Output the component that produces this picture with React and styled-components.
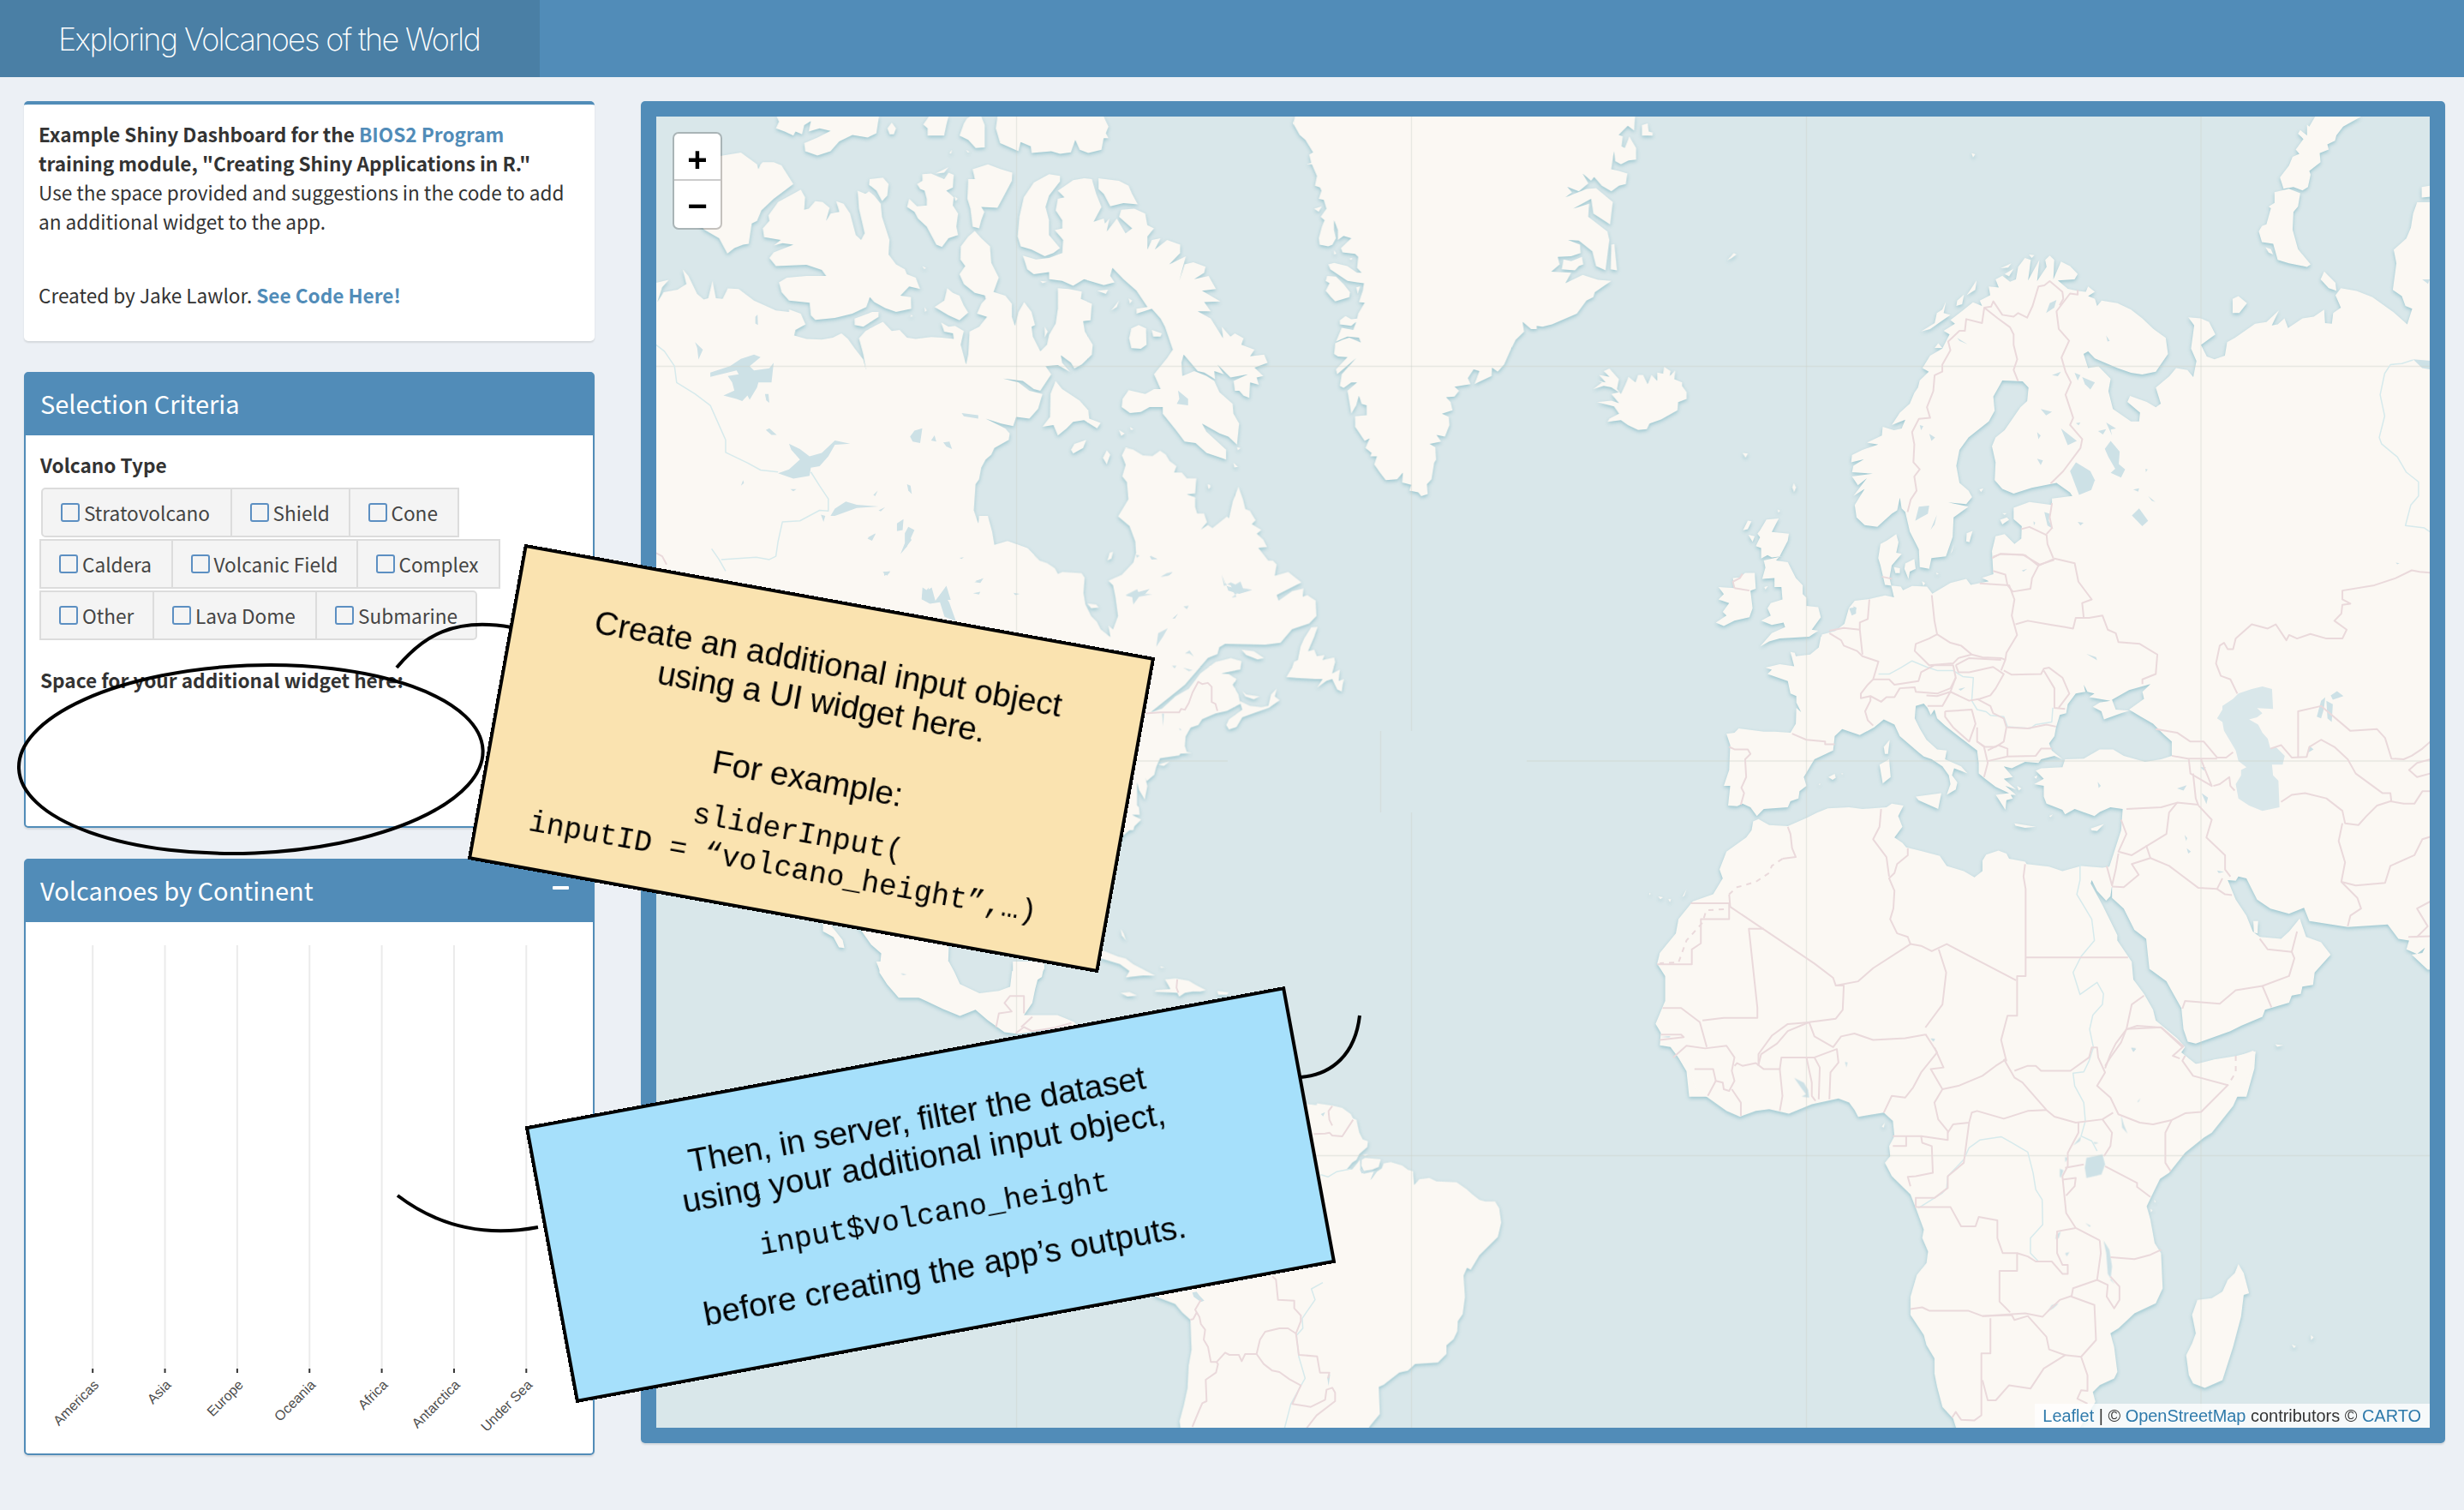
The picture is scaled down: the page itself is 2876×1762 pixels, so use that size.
import React from 'react';
import styled, { createGlobalStyle } from 'styled-components';

const sourceSans = '"Noto Sans CJK JP", "Noto Sans", sans-serif';
const helvetica = '"Liberation Sans", Arial, sans-serif';
const mono = '"Liberation Mono", "Courier New", monospace';
const blue = '#518cb8';

const GlobalStyle = createGlobalStyle`
  * { box-sizing: border-box; }
  body { margin: 0; background: #ecf0f5; }
`;

const Page = styled.div`
  position: relative;
  width: 2876px;
  height: 1762px;
  overflow: hidden;
  background: #ecf0f5;
  color: #333;
  font-family: ${sourceSans};
  font-size: 22.6px;
`;

const Header = styled.header`
  display: flex;
  height: 90px;
  background: ${blue};
`;

const Logo = styled.div`
  width: 630px;
  padding-left: 68px;
  background: #4a7fa5;
  color: #fff;
  font: 200 36px/92px Inter, ${helvetica};
  letter-spacing: -1.64px;
  white-space: nowrap;
`;

const Content = styled.main`
  display: flex;
  align-items: flex-start;
  gap: 54px;
  padding: 28px 22px 0 28px;
`;

const Sidebar = styled.div`
  display: flex;
  flex-direction: column;
  gap: 36px;
  width: 666px;
`;

const IntroCard = styled.section`
  height: 280px;
  padding: 18px 17px 0;
  border-top: 4px solid ${blue};
  border-radius: 5px;
  background: #fff;
  box-shadow: 0 2px 2px rgba(0, 0, 0, 0.1);
  line-height: 34.1px;
  white-space: nowrap;
`;

const Credit = styled.p`
  margin: 52px 0 0;
`;

const Link = styled.a`
  color: ${(p) => p.$color || blue};
  font-weight: ${(p) => (p.$plain ? 400 : 700)};
`;

const Card = styled.section`
  height: ${(p) => p.$height}px;
  border: 2px solid ${blue};
  border-radius: 5px;
  background: #fff;
  box-shadow: 0 2px 2px rgba(0, 0, 0, 0.1);
`;

const CardHeader = styled.h3`
  display: flex;
  justify-content: space-between;
  align-items: flex-start;
  height: 72px;
  margin: 0;
  padding: 0 28px 0 17px;
  background: ${blue};
  color: #fff;
  font-size: 29px;
  font-weight: 400;
  line-height: 68px;
`;

const Collapse = styled.span`
  width: 19px;
  height: 4px;
  margin-top: 30px;
  border-radius: 1px;
  background: #fff;
`;

const FieldLabel = styled.div`
  padding-left: 17px;
  margin-top: ${(p) => p.$top}px;
  font-weight: 700;
  line-height: 34px;
`;

const CheckRows = styled.div`
  display: flex;
  flex-direction: column;
  gap: 2px;
  margin: 9px 0 0 16px;
`;

const CheckRow = styled.div`
  display: flex;
  margin-left: ${(p) => p.$indent || 0}px;
`;

const CheckButton = styled.label`
  display: flex;
  align-items: center;
  gap: 5px;
  width: ${(p) => p.$width}px;
  height: 58px;
  padding-left: 21px;
  margin-right: -2px;
  border: 2px solid #dcdcdc;
  border-radius: ${(p) => p.$radius || '0'};
  background: #f4f4f4;
  color: #444;
  white-space: nowrap;
`;

const CheckBox = styled.span`
  flex: none;
  width: 22px;
  height: 22px;
  border: 2.5px solid #5c8fc2;
  border-radius: 3px;
`;

const Chart = styled.svg`
  display: block;
  width: 662px;
  height: 620px;
`;

const MapCard = styled.section`
  position: relative;
  width: 2106px;
  height: 1566px;
  padding: 18px;
  border-radius: 5px;
  background: ${blue};
  box-shadow: 0 2px 2px rgba(0, 0, 0, 0.1);
`;

const MapCanvas = styled.svg`
  display: block;
  width: 2070px;
  height: 1530px;
  background: #d9e7ea;
`;

const LandLayer = styled.g`
  fill: #fbf8f3;
  filter: drop-shadow(0 2px 2px rgba(130, 185, 196, 0.7));
`;

const Lake = styled.polygon`
  fill: ${(p) => (p.$open ? '#d9e7ea' : '#cde1e6')};
`;

const Line = styled.polyline`
  fill: none;
  stroke: ${(p) => p.$color};
  stroke-width: ${(p) => p.$weight}px;
  stroke-dasharray: ${(p) => (p.$dashed ? '6 6' : 'none')};
  stroke-linejoin: round;
  vector-effect: non-scaling-stroke;
`;

const ZoomControl = styled.div`
  position: absolute;
  top: 36px;
  left: 37px;
  width: 58px;
  border: 2px solid rgba(0, 0, 0, 0.22);
  border-radius: 7px;
  background: #fff;
  background-clip: padding-box;
`;

const ZoomButton = styled.div`
  height: 53px;
  color: #000;
  font: 700 40px/61px ${helvetica};
  text-align: center;
  & + & { height: 57px; border-top: 2px solid #ccc; line-height: 59px; }
`;

const Attribution = styled.div`
  position: absolute;
  right: 18px;
  bottom: 18px;
  height: 28px;
  padding: 0 10px 0 9px;
  background: rgba(255, 255, 255, 0.75);
  font: 19.95px/28px ${helvetica};
  white-space: nowrap;
`;

const Annotations = styled.svg`
  position: absolute;
  inset: 0;
  width: 2876px;
  height: 1762px;
  fill: none;
  stroke: #000;
  stroke-width: 4px;
`;

const Note = styled.div`
  position: absolute;
  left: ${(p) => p.$x}px;
  top: ${(p) => p.$y}px;
  width: ${(p) => p.$width}px;
  height: ${(p) => p.$height}px;
  display: flex;
  flex-direction: column;
  align-items: center;
  padding-top: 48px;
  border: 4px solid #000;
  background: ${(p) => p.$fill};
  color: #000;
  transform: rotate(${(p) => p.$angle}deg);
`;

const NoteText = styled.div`
  margin-top: ${(p) => p.$gap || 0}px;
  font: 38.6px/45.2px ${helvetica};
  letter-spacing: ${(p) => p.$track || 0}px;
  white-space: pre;
`;

const NoteCode = styled.div`
  margin-top: ${(p) => p.$gap || 0}px;
  margin-left: ${(p) => p.$shift || 0}px;
  font: 34.6px/42.6px ${mono};
  white-space: pre;
`;

const volcanoTypes = [
  [['Stratovolcano', 222.5], ['Shield', 140], ['Cone', 129]],
  [['Caldera', 155.5], ['Volcanic Field', 218], ['Complex', 168]],
  [['Other', 134], ['Lava Dome', 192], ['Submarine', 189]],
];

const continents = ['Americas', 'Asia', 'Europe', 'Oceania', 'Africa', 'Antarctica', 'Under Sea'];

/* Each survey sheet holds its shapes in its own grid: origin and grid steps per unit. */
const sheets = [
  {
    name: 'arctic', origin: [750, 100], steps: [1.96, 2.61333],
    land: [
      '20 604 60 592 45 615 34 660 48 630 80 622 100 605 92 560 105 580 125 635 140 652 150 648 160 595 168 648 183 650 195 618 220 620 255 655 305 685 335 690 335 682 362 695 373 728 350 745 347 762 375 772 410 774 435 768 455 755 470 772 485 800 505 835 511 865 505 820 495 770 510 748 535 730 550 720 570 748 588 745 605 768 625 772 660 766 685 768 712 772 710 755 690 750 683 722 700 735 715 732 735 748 728 790 740 850 745 820 748 750 770 735 788 705 765 695 775 665 785 650 782 635 800 628 830 640 845 665 845 705 852 732 860 690 873 660 890 690 898 730 890 735 893 765 910 810 925 790 930 760 945 725 950 680 950 617 975 620 1005 628 1003 650 1028 665 1025 715 1008 718 1012 750 1030 790 1028 820 1005 850 988 862 980 845 957 822 960 845 978 873 950 852 922 855 935 880 910 930 895 925 870 900 825 893 860 905 885 930 915 940 905 985 885 1015 855 1010 848 1038 820 1030 785 1015 830 1045 840 1060 838 1080 805 1105 798 1125 785 1140 775 1165 770 1200 762 1215 758 1295 768 1335 770 1312 790 1312 800 1360 805 1400 835 1388 880 1410 895 1430 895 1725 20 1725',
      '150 220 225 204 262 240 265 255 270 240 275 233 300 233 318 243 345 300 300 345 272 380 262 412 250 420 243 482 230 485 210 495 194 512 175 465 140 438 120 400',
      '362 317 372 340 370 378 380 375 395 352 412 355 428 372 420 412 430 390 450 385 443 352 460 360 475 390 488 455 500 470 508 450 495 375 492 320 510 330 518 322 530 335 545 360 548 400 565 470 563 515 580 545 600 560 605 575 625 585 635 620 610 612 590 640 614 645 615 680 580 690 555 678 530 660 520 645 512 675 480 695 440 708 395 714 385 700 382 662 335 655 318 630 312 600 330 585 375 580 420 580 410 562 375 546 305 550 290 525 300 508 345 485 320 480 300 487 316 470 278 462 275 435 290 412 288 395 310 355',
      '307 94 312 110 305 130 325 140 345 152 350 140 365 148 370 120 385 108 380 140 405 130 430 138 400 158 370 175 372 200 400 213 430 200 450 170 480 150 515 158 535 145 541 94',
      '570 112 580 130 575 148 565 148 560 130', '655 94 642 118 652 130 652 152 690 152 695 120 700 94',
      '742 100 750 94 775 94 783 120 783 188 762 190 745 165 725 152 735 115',
      '812 94 808 130 818 175 860 200 865 172 888 185 890 205 935 200 955 208 980 203 990 165 1000 195 1020 205 1050 195 1055 160 1066 160 1060 145 1066 125 1055 94',
      '520 285 550 280 563 300 560 335 548 352 535 320 518 302',
      '640 270 660 268 690 285 700 265 712 272 710 310 695 320 712 340 710 365 722 390 718 430 722 455 700 465 685 492 672 485 650 430 630 405 622 385 605 370 610 345 628 368 650 365 650 345 645 320 635 315 628 300 640 290',
      '670 268 700 248 690 265', '755 255 790 240 820 255 846 265 845 290 825 340 812 372 775 370 782 385 775 410 770 435 755 430 750 375 743 345 745 285 760 285',
      '760 443 775 465 795 490 798 540 815 585 800 640 785 640 760 632 735 605 725 575 738 550 727 530 728 490 745 460',
      '930 270 955 275 955 292 930 335 922 370 930 410 930 455 955 495 940 510 920 520 890 500 865 490 858 460 862 400 872 340 895 295',
      '1043 282 1090 290 1112 305 1120 330 1133 362 1100 358 1070 368 1055 330 1043 315',
      '950 320 985 288 1010 282 1028 285 1038 330 1050 370 1032 415 1055 405 1058 420 1068 405 1062 445 1085 405 1105 450 1120 435 1090 400 1095 378 1125 375 1150 390 1155 425 1170 435 1155 460 1155 500 1165 470 1185 465 1172 500 1200 470 1230 485 1230 510 1205 545 1243 520 1228 595 1240 545 1260 538 1288 552 1285 570 1262 590 1295 580 1312 620 1280 625 1322 658 1285 660 1300 688 1270 688 1300 710 1328 770 1325 735 1345 765 1355 755 1375 770 1370 790 1400 805 1390 825 1422 820 1430 845 1400 860 1420 885 1405 890 1410 912 1390 905 1388 952 1375 945 1365 930 1355 930 1352 900 1385 880 1345 890 1315 850 1330 880 1308 870 1310 895 1285 875 1270 870 1238 820 1233 845 1235 885 1262 870 1290 885 1308 900 1320 935 1350 970 1352 1000 1365 1030 1360 1095 1340 1070 1320 1060 1280 1030 1290 1055 1335 1110 1335 1140 1290 1120 1265 1090 1240 1085 1220 1050 1190 1000 1190 980 1160 980 1140 995 1115 998 1096 980 1098 955 1112 928 1150 940 1170 925 1185 925 1170 880 1200 830 1213 805 1195 735 1185 710 1165 680 1130 695 1130 680 1155 675 1130 625 1100 590 1075 555 1070 580 1080 600 1055 608 1010 590 985 610 960 595 930 590 930 568 895 575 880 560 870 518 900 530 930 525 960 510 962 470 943 440 960 435 960 410 945 380 950 345 965 340',
      '697 617 710 632 725 640 735 670 745 692 725 715 700 700 668 675 690 655', '485 730 485 710 525 690 540 690 540 705 505 735',
      '1118 740 1135 730 1152 740 1153 790 1140 802 1118 800 1113 770', '1165 745 1188 755 1185 765 1168 765',
      '945 900 960 925 1000 960 1020 990 1022 1015 1048 1028 1040 1045 1010 1020 985 1025 970 1045 950 1067 940 1035 915 1040 932 1010 933 940',
      '988 1092 1015 1080 1008 1105 985 1122 980 1110', '1062 1112 1070 1125 1062 1155 1053 1135', '1090 1050 1103 1060 1095 1068', '1115 1040 1123 1048 1117 1050',
      '1072 685 1090 655 1085 675', '1112 648 1120 655 1115 665', '1040 625 1065 622 1060 635', '910 595 925 598 915 602', '920 735 927 750 920 768', '645 675 650 685 646 690', '615 698 618 703 613 705',
      '1293 1215 1299 1218 1295 1230', '1352 1150 1362 1162 1354 1164', '1360 1103 1368 1105 1362 1112', '640 550 648 555 645 560', '740 195 748 202 744 204', '702 205 708 195 706 207',
      '714 338 721 345 716 352',
    ],
    lakes: [
      '155 875 200 855 225 833 255 820 270 828 245 855 255 868 290 862 300 845 295 905 265 905 262 920 245 958 240 945 228 962 215 955 185 945 210 930 205 905 195 885 220 880 215 868 155 888',
      '335 1092 360 1108 382 1130 410 1120 440 1082 475 1092 440 1095 425 1130 405 1160 385 1165 382 1190 345 1198 310 1182 335 1170 360 1140 340 1110',
      '430 1312 440 1290 465 1268 490 1278 540 1283 490 1288 440 1312', '282 1050 290 1045 307 1065 295 1065', '612 1070 622 1052 640 1045 635 1090 618 1085', '660 1082 668 1066 672 1085',
      '688 1088 702 1085 708 1108 695 1100', '730 998 768 1005 768 1015 735 1008', '258 705 263 698 264 730 258 725', '120 782 138 805 128 835 125 800', '280 940 288 940 290 967 283 960',
      '600 1365 608 1345 622 1355 605 1405 590 1428 600 1395', '582 1335 597 1322 595 1355 582 1358', '515 1378 533 1365 525 1383', '552 1482 566 1485 553 1495', '605 1215 613 1220 616 1245 608 1235',
      '528 1248 538 1235 532 1252', '225 1220 230 1203 232 1212', '338 1230 352 1230 345 1237', '540 1295 555 1285 545 1298', '1225 930 1248 955 1248 975 1222 970 1228 955', '640 1552 655 1530 650 1568 640 1568', '672 1568 695 1525 705 1568',
      '1105 1555 1160 1535 1150 1550 1125 1560', '1328 1495 1335 1525 1360 1535 1395 1538 1365 1550 1340 1540', '1188 1495 1212 1485 1205 1493', '1160 1435 1178 1443 1165 1445', '408 1308 418 1312 414 1330', '762 1510 778 1503 770 1515', '725 1440 735 1438 730 1443', '1212 1625 1225 1610 1218 1625',
    ],
    rivers: ['31 790 50 810 73 855 78 905 120 940 155 975 190 1080 190 1118 240 1150 270 1172 310 1178', '385 1178 405 1220 425 1260 425 1297 405 1295 360 1327 320 1330 310 1390 305 1435 290 1445 260 1438 180 1445', '158 1412 175 1445 190 1480'],
    borders: ['31 1425 45 1435 55 1460'],
  },
  {
    name: 'east canada', origin: [1200, 500], steps: [2.24, 2.24],
    land: [
      '-30 303 0 315 30 345 50 352 70 365 78 380 90 375 140 378 148 390 145 430 150 460 165 490 180 505 190 525 215 545 210 515 222 525 235 490 228 440 222 410 210 398 245 382 275 350 282 325 280 295 265 255 235 230 250 205 262 185 258 140 246 125 255 95 245 70 255 50 275 55 300 70 325 72 345 58 360 68 370 85 388 98 382 115 402 115 415 130 440 130 437 170 415 172 437 180 437 205 442 222 460 222 468 245 452 264 470 252 482 260 520 230 525 235 535 190 550 152 562 185 568 210 580 215 595 240 585 250 610 265 598 275 615 290 625 310 602 312 628 345 640 345 650 355 645 385 680 375 715 402 650 435 655 450 690 425 720 418 718 440 730 435 752 450 754 490 735 510 690 525 660 560 620 565 515 563 500 572 495 590 470 600 440 635 410 670 385 690 350 718 320 742 350 732 385 700 420 680 450 640 490 610 530 600 558 608 555 630 505 640 525 642 545 655 535 670 550 695 555 720 520 738 490 745 455 760 445 775 425 782 412 805 410 830 415 845 428 848 398 850 395 855 345 862 335 885 330 905 310 922 302 900 306 910 312 935 305 970 290 945 285 925 285 985 290 990 292 1010 272 1010 296 1022 278 1040 275 1050 265 1050 248 1065 230 1100 -30 950',
      '757 518 740 520 722 548 712 570 705 605 695 610 690 625 675 650 700 652 750 655 770 655 755 678 780 660 795 655 808 682 820 688 825 655 812 660 815 630 795 640 803 610 800 598 770 605 775 592 755 595 748 578 732 582 748 545',
      '553 712 580 725 610 728 628 725 635 695 650 680 645 700 658 710 630 730 580 748 560 755 545 780 525 787 518 775 525 760 560 735', '558 578 590 582 617 600 600 604 570 592', '560 686 570 695 605 700 590 708 568 700',
      '190 1362 235 1380 255 1385 275 1400 332 1430 300 1430 255 1435 265 1418 240 1400 190 1385', '358 1440 385 1437 420 1443 440 1455 465 1468 450 1472 430 1472 410 1475 395 1485 390 1475 330 1472 335 1468 372 1465',
      '242 1475 265 1473 285 1482 260 1485', '495 1470 525 1474 520 1480 497 1480', '242 1308 250 1320 256 1338 245 1325', '207 345 213 325 222 322 218 340', '155 457 178 460 185 468 165 470', '340 878 370 870 355 882', '345 1406 357 1408 348 1410', '470 148 478 152 472 158',
    ],
    lakes: ['506 382 514 405 530 410 535 425 545 440 532 442 555 424 585 420 562 418 555 400 542 408 530 402 512 412', '255 435 285 420 290 432 325 433 290 440 275 460 272 440', '320 332 338 342 322 340', '346 388 362 378 378 375 365 385', '335 570 340 535 365 522 352 545', '406 465 420 463 415 472', '410 588 422 580 433 596 422 588', '376 620 388 620 383 627', '350 745 355 745 353 778', '405 625 430 632 420 634', '282 330 292 332 284 338', '395 783 402 788 396 788'],
    rivers: [],
    borders: ['305 745 345 742 395 742 400 733 410 735 420 718 430 690 445 662 455 668 470 665 480 675 480 715 490 720 495 738', '390 1440 388 1462 393 1475'],
  },
  {
    name: 'greenland', origin: [1450, 100], steps: [2.24, 2.61333],
    land: [
      '138 94 133 115 150 150 165 165 185 203 175 210 180 235 168 240 182 240 195 275 190 305 203 310 207 320 200 345 213 348 220 375 205 400 215 410 208 430 200 465 202 485 225 490 236 485 245 465 240 440 240 410 250 440 250 470 265 458 285 465 258 495 262 508 295 513 303 522 300 555 312 570 300 570 275 550 240 540 225 545 230 560 275 595 300 600 318 602 315 625 305 660 320 662 303 695 300 710 285 712 270 702 255 715 255 728 285 732 298 720 290 745 260 738 245 780 275 765 305 768 310 783 280 768 262 775 243 785 240 818 250 826 275 828 245 865 248 880 298 830 260 880 255 915 265 922 285 905 300 905 275 930 285 1000 298 975 305 945 312 970 325 975 325 1005 295 1008 295 1040 320 1083 333 1075 322 1105 338 1120 335 1130 352 1130 345 1155 360 1180 375 1203 405 1200 420 1180 418 1210 442 1217 437 1235 460 1240 468 1252 485 1245 483 1215 495 1200 502 1150 507 1140 505 1103 490 1092 520 1085 508 1065 530 1070 542 1035 540 1010 522 1000 550 990 545 965 533 950 555 948 567 930 555 918 597 910 590 892 605 865 620 870 607 910 652 885 653 860 668 872 685 850 700 810 715 775 737 750 733 720 755 742 770 742 770 732 785 735 810 728 875 695 900 655 918 645 922 630 965 595 930 592 890 577 845 602 860 570 808 567 830 545 825 522 860 520 885 510 883 485 852 470 880 472 915 505 925 550 950 563 960 470 955 445 905 400 907 360 865 375 912 345 918 390 962 423 969 355 925 312 900 315 845 340 862 325 850 308 880 322 905 298 890 268 912 290 920 278 940 305 965 322 985 305 1003 300 1007 268 985 260 965 255 972 200 975 230 990 240 1010 228 1030 225 1030 190 1012 155 1000 190 992 185 995 155 965 142 980 155 1008 122 1025 137 1027 94',
      '222 580 245 582 265 605 282 630 280 645 243 658 232 645 218 625 228 602 218 595', '1045 120 1060 115 1063 140 1073 143 1073 152 1045 152', '965 485 973 483 980 563 963 560', '840 530 860 535 888 522 892 545 880 550 870 563 835 560', '298 615 308 612 302 635', '188 375 208 368 200 385', '240 502 246 512 240 515', '280 527 288 525 285 532',
      '1103 857 1120 870 1118 885 1132 868 1130 895 1150 905 1150 915 1162 935 1162 955 1140 965 1138 990 1115 1005 1095 1018 1065 1030 1058 1047 1035 1050 1008 1035 990 1020 955 1025 960 1015 985 1000 972 978 928 965 965 960 985 968 965 940 985 935 965 920 945 915 918 925 940 905 930 900 950 905 933 882 960 888 945 870 960 862 985 895 980 925 990 940 1000 915 1010 888 1028 905 1035 882 1048 882 1060 910 1070 882 1085 900 1085 875 1100 878',
      '1268 533 1285 510 1292 515 1280 525', '1308 1120 1322 1122 1316 1135', '1438 1225 1442 1212 1448 1225 1443 1240', '1400 1292 1406 1296 1401 1302',
    ],
    lakes: [], rivers: [], borders: [],
  },
  {
    name: 'scandinavia', origin: [2050, 100], steps: [1.898, 2.4123],
    land: [
      '1500 328 1464 328 1455 360 1450 400 1440 430 1412 462 1418 500 1410 575 1430 592 1438 620 1453 628 1442 672 1412 638 1365 595 1330 578 1295 570 1283 590 1295 625 1278 640 1275 670 1260 668 1258 630 1235 650 1210 655 1178 682 1170 655 1155 672 1142 675 1158 632 1130 665 1105 670 1060 710 1043 722 1038 760 1015 770 998 762 985 730 1017 700 1003 665 985 655 957 652 970 675 963 740 975 775 968 820 955 800 930 795 915 818 885 850 896 895 885 905 865 890 828 873 822 890 850 920 848 945 830 945 790 910 780 860 785 825 758 790 735 795 725 755 735 748 750 768 800 795 830 808 855 813 885 805 912 755 907 710 880 685 855 655 830 630 800 612 765 605 755 620 750 600 735 592 750 580 735 565 730 580 712 578 690 572 668 548 705 545 712 530 695 508 675 495 658 545 660 490 650 478 640 490 643 510 622 550 627 490 602 548 608 490 595 485 580 510 575 545 562 552 545 535 530 545 537 568 515 565 518 590 495 605 500 620 480 610 455 635 430 660 440 670 415 690 428 700 412 740 385 760 368 795 382 805 362 830 358 850 350 865 340 895 318 920 300 955 330 940 322 965 305 970 280 960 278 985 245 1005 270 1010 235 1025 212 1040 210 1060 238 1052 215 1070 212 1088 258 1092 212 1100 225 1125 245 1105 215 1155 240 1135 218 1180 222 1215 240 1237 268 1242 300 1205 312 1195 318 1160 322 1190 330 1200 340 1255 360 1305 362 1355 383 1360 388 1330 420 1325 435 1270 437 1215 470 1185 425 1173 465 1178 478 1158 470 1140 450 1118 443 1070 450 1025 470 990 515 945 528 915 525 875 545 830 590 832 603 850 600 888 585 905 550 970 530 990 522 1015 530 1060 528 1110 545 1135 570 1148 610 1132 665 1118 695 1145 700 1155 655 1162 655 1180 605 1172 570 1188 570 1220 588 1240 587 1275 572 1290 550 1262 530 1268 522 1310 525 1375 500 1385 515 1395 475 1405 465 1388 430 1400 390 1430 378 1410 345 1408 325 1420 320 1410 285 1405 275 1350 270 1330 275 1290 290 1280 310 1262 315 1285 310 1315 322 1318 300 1350 295 1385 305 1440 285 1435 250 1445 218 1450 205 1470 195 1515 175 1535 145 1545 143 1620 1500 1620',
      '1238 87 1225 115 1220 110 1220 140 1205 125 1200 135 1212 150 1195 180 1203 192 1188 200 1180 225 1160 258 1168 290 1190 285 1210 295 1222 285 1228 250 1225 240 1250 215 1248 190 1268 180 1265 165 1282 155 1285 140 1300 115 1340 87',
      '1180 290 1205 303 1200 340 1190 355 1188 405 1200 460 1228 503 1220 510 1180 500 1155 490 1145 445 1120 440 1113 410 1120 395 1130 390 1140 345 1135 340 1148 330 1148 300', '1128 455 1140 460 1145 475 1135 470',
      '1258 523 1283 555 1285 577 1268 570 1250 545', '1055 600 1068 592 1087 612 1070 640 1055 640', '1474 285 1500 280 1500 312 1474 315', '477 190 485 193 480 202', '466 1260 479 1253 472 1285 465 1283', '540 1222 555 1215 560 1222 545 1235', '545 1203 555 1203 550 1208',
      '330 1345 350 1332 353 1360 340 1368 337 1388 328 1360', '305 1355 318 1358 318 1372 308 1372', '365 692 395 668 400 640 412 630 420 608 415 640 430 645 400 672 385 685', '445 605 460 588 456 615 443 620', '466 590 488 548 485 575', '541 514 565 500 558 512', '550 530 570 515 560 537', '604 475 616 477 610 485', '395 738 403 725 412 738', '398 1370 404 1374 400 1376', '494 1136 503 1134 498 1144', '367 1395 374 1400 370 1408', '430 1318 438 1290 434 1310',
    ],
    lakes: [
      '695 1085 708 1060 740 1085 750 1110 742 1138 715 1152', '772 1022 785 1000 805 1030 803 1065 817 1080 808 1103 785 1090 795 1078 780 1045', '352 1225 360 1185 383 1182 380 1205 365 1215', '386 1250 400 1208 395 1235', '638 1200 650 1205 648 1225 658 1248 645 1238', '832 1210 848 1190 868 1225 855 1240',
      '642 640 650 612 665 603 660 625', '775 703 783 718 778 720', '705 808 718 815 712 830', '722 820 750 835 740 855 728 840', '757 972 775 967 768 982', '775 948 797 965 785 968 788 985', '630 910 655 918 642 928', '675 965 710 1000 690 1012', '622 1050 635 1055 630 1068', '622 975 630 985 625 995', '383 980 396 990 388 1000', '362 955 370 958 365 970', '835 1137 848 1133 846 1143', '862 1078 867 1080 863 1088', '712 1228 725 1230 718 1238', '868 1155 884 1172 876 1168', '655 815 675 805 668 818', '445 710 468 728 450 718', '1455 770 1500 775 1500 800 1475 795', '1475 545 1492 545 1488 558', '708 950 718 948 714 956', '588 1365 600 1360 592 1368', '614 1226 618 1230 615 1238', '215 1465 222 1470 218 1485',
    ],
    rivers: ['1455 772 1430 782 1405 785 1392 810 1382 870 1392 930 1380 990 1385 1008 1420 1045 1440 1088 1467 1115 1467 1155 1450 1180 1438 1238 1480 1245 1495 1258'],
    borders: [
      '335 1200 342 1165 355 1140 350 1100 362 1080 348 1060 350 1010 345 975 360 938 385 935 378 905 392 860 395 815 412 805 412 785 430 745 425 720 450 690 462 690 465 657 500 668 505 625 520 622 525 607 545 645 570 650 580 640 600 653 612 620 625 565 638 562 650 550 678 580 680 600 672 618',
      '505 625 535 655 562 680 570 700 570 730 578 770 570 800 580 832', '712 575 712 588 695 585 665 635 670 685 693 718 676 765 685 805 697 835 685 870 702 935 695 955 722 995 718 1020 680 1085 652 1120', '655 1175 650 1215 655 1245 643 1262', '587 1248 605 1242 643 1265 645 1290 658 1330', '522 1330 540 1318 590 1320 628 1348 660 1335', '278 1382 300 1388',
    ],
  },
  {
    name: 'europe', origin: [1900, 600], steps: [1.6066, 2.4123],
    land: [
      '260 15 283 12 270 50 302 55 300 75 285 118 278 130 300 135 315 180 328 200 328 225 335 235 335 258 357 262 362 290 345 325 357 328 340 345 285 350 265 358 248 373 270 335 295 318 292 305 270 312 250 300 268 285 262 265 268 250 290 240 288 205 275 205 275 180 252 182 258 150 255 130 290 118 270 122 262 115 250 125 250 95 240 90 248 65 243 55 248 45',
      '220 165 238 165 240 210 230 215 234 265 228 290 200 300 180 315 165 305 185 285 178 275 190 250 170 240 180 225 170 205 200 208 197 180 210 178', '216 45 225 18 232 20 225 42', '226 58 238 62 234 78', '256 205 263 202 258 212',
      '1510 340 378 335 362 345 358 375 342 395 315 400 313 390 305 388 312 428 285 422 258 432 270 438 262 450 300 470 305 505 316 512 316 530 325 557 316 545 315 590 305 615 275 612 255 612 208 603 200 615 185 618 192 650 190 720 180 765 192 765 188 820 205 822 215 815 230 825 242 850 255 830 300 825 305 808 320 800 322 780 335 765 330 740 350 690 385 665 388 625 402 605 435 622 462 600 480 578 500 592 510 625 545 670 555 682 570 690 590 710 602 735 605 760 598 790 615 775 618 755 608 735 612 715 637 730 625 710 595 690 598 665 580 662 560 635 548 605 538 575 540 540 555 533 562 545 568 565 575 550 580 575 595 595 620 625 655 665 658 700 658 730 670 745 690 768 715 785 690 790 708 832 710 805 722 800 718 790 728 790 708 765 728 775 705 745 722 740 705 710 720 715 745 697 770 700 775 690 800 680 815 690 795 665 790 645 800 625 803 600 810 565 822 560 825 535 840 505 858 500 855 480 862 500 875 505 865 515 905 525 885 530 872 542 888 555 893 578 925 560 940 553 915 550 908 522 940 495 980 478 965 500 968 520 940 550 962 570 985 590 1005 620 1020 640 1020 680 1000 690 970 697 930 680 910 662 885 662 855 688 820 690 815 712 775 715 765 722 780 745 762 760 780 765 780 795 785 815 815 832 820 845 838 830 875 850 885 838 905 825 928 830 925 890 910 960 903 992 890 995 850 990 815 1005 790 992 748 985 745 978 715 970 710 955 695 947 672 958 665 975 665 1005 650 1022 630 1005 598 990 585 962 550 948 522 938 515 925 500 910 515 880 507 850 517 820 495 815 485 825 440 830 415 825 375 828 355 840 335 855 300 878 265 875 245 858 235 865 232 890 222 910 185 950 172 1000 178 1025 160 1070 122 1090 95 1140 90 1180 60 1235 55 1265 70 1300 70 1370 52 1435 62 1460 60 1495 80 1500 95 1530 110 1568 115 1640 1160 1640 1175 1560 1177 1512 1140 1525 1100 1535 1065 1548 1038 1515 1045 1500 1030 1475 990 1425 985 1395 968 1350 948 1310 945 1260 918 1200 918 1185 890 1100 868 1040 870 1030 880 1060 897 1088 905 1075 908 1045 908 1080 930 1110 950 1170 972 1195 978 1280 1010 1315 1038 1390 1042 1450 1050 1485 1065 1490 1130 1455 1150 1440 1190 1415 1195 1395 1240 1375 1245 1355 1262 1350 1265 1330 1285 1325 1288 1290 1318 1240 1300 1205 1272 1190 1260 1138 1240 1175 1225 1195 1185 1190 1172 1175 1160 1130 1140 1085 1125 1030 1140 1032 1145 1020 1160 1025 1180 1085 1205 1110 1240 1125 1268 1108 1278 1145 1350 1162 1425 1155 1445 1195 1465 1200 1460 1225 1480 1238 1495 1220 1490 1235 1470 1240 1500 1282 1510 1282',
      '540 795 588 785 582 830 545 805', '472 705 490 690 493 740 478 758', '480 655 491 635 488 675 482 675', '725 870 765 880 745 883 727 877', '868 885 893 872 880 892 870 890', '376 740 388 731 390 742 384 748', '358 760 361 758 360 763', '400 730 404 730 402 733', '57 1076 66 1078 61 1084', '76 1084 81 1084 79 1092', '102 1078 110 1056 106 1074', '40 1066 43 1068 41 1072', '1173 1145 1182 1145 1181 1180 1174 1178', '1214 1492 1229 1495 1218 1499', '790 850 797 845 793 853', '762 740 768 735 766 745', '730 765 738 772 733 778',
    ],
    seas: [
      '1115 540 1135 520 1145 505 1170 492 1190 485 1208 492 1210 548 1180 546 1190 560 1180 572 1165 578 1182 592 1190 615 1200 632 1205 660 1215 655 1232 680 1228 705 1208 705 1210 735 1220 750 1222 825 1190 835 1165 820 1145 800 1140 760 1150 735 1150 720 1160 712 1145 695 1140 665 1130 640 1118 610 1115 585 1105 575 1115 550',
      '782 698 815 692 812 703 790 708',
    ],
    lakes: [
      '1292 570 1300 525 1308 515 1305 550 1300 575', '1310 525 1322 535 1320 585 1312 575', '1318 510 1330 498 1342 512 1322 522', '1030 772 1048 763 1042 778', '1076 785 1088 798 1085 816', '881 753 887 765 883 771', '860 393 878 402 880 411', '1044 903 1049 912 1047 920', '1048 940 1056 950 1051 955', '1278 652 1286 662 1275 672', '944 1502 953 1505 948 1514', '568 1477 576 1477 573 1484', '415 265 428 262 428 280 420 285', '620 492 633 487 624 497', '1105 1003 1118 1007 1108 1010', '1074 712 1084 712 1080 722', '1440 136 1447 138 1443 141',
    ],
    rivers: ['470 450 490 450 512 432 533 413 560 430 580 440 610 440 628 457 648 460 645 525 655 550 672 556 680 566 705 570 712 598 755 603 765 592 795 585 797 545', '848 985 848 1030 842 1070 870 1140 875 1200 850 1245 835 1290 848 1352 880 1318 892 1350 890 1380 872 1410 866 1450 873 1500'],
    borders: [
      '308 618 335 635 370 640 370 648 388 648', '190 655 200 662 225 662 230 675 220 690 222 740 213 770 218 785 212 818', '378 335 400 355 405 370 430 385 440 400 470 415 460 465 450 480 437 505 437 518 455 512 455 525 445 555 450 580 460 595', '460 465 490 465 500 480 545 470 550 445 575 425 610 425 615 460 605 490 580 505 540 500 538 487 510 490 500 515 485 515 475 528 455 512',
      '453 240 450 295 435 305 435 325 440 395', '378 328 405 320 435 325', '570 228 575 300 580 338 565 350 540 365 538 385 555 410 565 425 610 420 620 405 645 395 625 370 605 362 580 338', '645 395 665 403 700 405 708 410', '660 195 715 200 725 240 720 285 730 340 710 390 708 410 700 440',
      '685 120 700 112 745 115 770 145 800 125', '685 160 708 170 712 200 722 218 755 210 758 180 770 145', '800 125 838 138 845 190 870 240 852 250 855 292', '727 310 750 300 795 312 820 318 835 322 840 292 865 292 890 285 900 325 915 335 920 360 960 365 993 395 990 450 965 465 965 478',
      '705 440 720 452 775 450 780 435 790 432 815 460 828 505 808 545', '780 440 800 490 800 545 820 548', '615 425 620 445 640 445 685 430 705 450 690 490 680 510 660 520 640 525 605 500 615 460', '615 425 640 405 700 410', '560 510 580 512 605 500 590 540 562 540', '595 555 645 550 652 590 640 640 610 600 595 570 595 555',
      '655 520 680 540 685 560 705 575 710 600 705 640 690 655 670 655 655 640 655 600', '712 600 750 603 785 592 803 598', '675 695 712 682 765 680 775 660 795 660', '655 640 668 655 675 700 668 740', '675 665 695 650 712 660 712 680', '990 605 1030 615 1055 640 1080 640 1105 685 1122 685 1135 670', '1020 680 1050 688 1105 688', '1052 690 1055 730 1095 765 1080 710 1075 690',
      '1060 730 1065 800 1070 820', '935 830 1000 825 1030 812 1070 818', '1098 765 1110 760 1128 740 1130 765 1138 778', '1143 505 1130 465 1112 455 1103 420 1110 370 1118 362 1125 380 1135 380 1140 350 1170 310 1200 322 1215 310 1235 355 1240 340 1255 350 1280 337 1310 350 1340 350 1348 325 1325 300 1338 280 1340 255 1355 252 1340 240 1340 215 1400 200 1440 180 1470 158 1485 162 1505 165',
      '1205 660 1225 650 1245 685 1273 683 1278 655 1300 635 1325 655 1350 690 1365 730 1415 785 1430 785 1432 810', '1257 685 1257 555 1300 540 1355 610 1405 605 1420 630 1432 688 1455 690 1470 680 1490 660 1505 640', '1225 810 1245 790 1270 785 1310 800 1340 835 1345 870 1370 875 1385 850 1405 820 1430 808 1455 815 1475 815 1490 780 1505 780', '1505 690 1480 700 1465 720 1480 740 1505 730',
      '1340 870 1333 920 1345 980 1338 1035 1368 1080 1375 1110 1355 1130 1350 1160', '1338 1035 1365 1045 1420 1038 1430 990 1475 960 1490 915 1505 908', '1505 1090 1480 1110 1500 1160 1480 1190 1465 1190 1505 1188', '1070 820 1095 860 1085 910 1120 960 1120 1000 1130 1020', '1030 812 1015 840 1010 900 945 960 920 950 935 900 925 860',
      '972 932 980 968 945 985 958 1015 930 1050 908 1048', '980 968 1015 990 1070 1052 1105 1055 1115 1025', '1105 1055 1120 1070 1133 1072', '920 955 915 1000 908 1045 898 990', '1185 1195 1200 1225 1245 1232 1255 1175', '1245 1232 1250 1250 1240 1300 1190 1328 1207 1388', '1040 1392 1045 1370 1110 1378 1140 1340 1190 1328',
      '300 880 305 900 308 940 315 965 290 970', '118 1095 190 1095 190 1140 137 1140 137 1208 120 1225 120 1267 55 1267', '190 1070 192 1105 350 1265 385 1305 390 1327 432 1315 460 1278 530 1210 550 1215 570 1230 598 1210 728 1312', '475 830 472 880 460 915 485 965 490 1020', '525 940 525 960 505 985 500 1010 490 1025 500 1060 498 1110 492 1140 505 1180 525 1190 530 1210',
      '745 985 742 1020 746 1055 746 1300 730 1300 730 1412 712 1412 700 1480 710 1540', '746 1248 938 1248', '255 1167 227 1167 243 1390 243 1418 180 1418 140 1425', '390 1327 405 1327 403 1395 390 1420 340 1430', '583 1225 597 1290 590 1380 558 1445', '65 1390 100 1390 135 1430 148 1500', '60 1480 105 1472 100 1465 62 1465', '340 1430 300 1455 280 1490 250 1520 245 1550', '340 1430 350 1470 385 1500 400 1470 425 1462 460 1480 520 1475 558 1465',
      '968 1355 945 1380 935 1450 915 1490 905 1520 895 1560', '935 1450 955 1440 1000 1445 1040 1500', '200 208 197 190 210 180 215 168', '200 208 228 215',
    ],
    dashed: ['290 970 270 990 265 1010 240 1035 205 1050 190 1070', '180 1112 147 1115 140 1150 110 1200 95 1262 60 1264'],
  },
  {
    name: 'africa', origin: [1900, 1150], steps: [1.6066, 2.562],
    land: [
      '90 200 105 240 120 270 125 305 150 335 185 375 210 392 240 375 265 370 302 383 345 355 395 338 415 350 425 372 432 393 450 388 480 380 497 405 500 450 490 480 492 510 482 530 495 570 530 625 540 665 555 730 552 755 563 795 560 830 542 865 530 930 530 985 555 1045 560 1075 575 1115 575 1160 580 1200 590 1260 610 1295 617 1330 845 1330 865 1275 877 1245 872 1215 885 1195 912 1175 918 1155 912 1080 905 1040 920 1025 950 980 990 950 1003 905 1000 800 988 770 980 700 973 660 985 620 998 578 1015 560 1045 500 1080 455 1095 440 1135 360 1155 290 1168 260 1177 200 1172 195 1140 215 1100 222 1080 232 1065 235 1040 205 1000 200',
      '1145 833 1155 860 1165 920 1155 925 1150 990 1135 1080 1115 1180 1082 1203 1060 1190 1052 1165 1047 1105 1058 1070 1065 1040 1058 985 1068 940 1095 935 1115 915 1125 880 1138 860', '1245 1073 1253 1078 1249 1084', '1281 1045 1286 1052 1281 1060', '476 422 482 410 480 425', '980 668 984 672 981 678', '987 640 990 646 988 650',
    ],
    lakes: ['860 515 890 505 895 535 888 565 860 575 857 545', '810 548 817 552 812 575 810 570', '892 762 903 790 908 840 905 880 913 893 900 862 897 800', '925 388 930 415 937 443 927 425', '835 478 850 450 848 465', '858 710 868 718 866 722', '803 745 812 735 808 755 802 758', '787 975 795 955 808 950 798 965', '312 276 330 290 338 312 340 335 326 332 334 325 326 308', '944 185 953 188 948 198', '407 228 412 230 410 245', '820 800 828 797 823 810', '820 512 826 517 820 528', '955 348 961 337 958 348', '568 158 576 160 573 167', '62 153 80 150 78 156', '872 468 883 470 876 474'],
    rivers: ['545 665 570 640 590 620 598 605 600 570 630 520 640 485 660 462 700 452 720 470 750 498 760 560 765 610 777 640 778 715 755 755 755 800 770 825', '873 185 865 225 855 258 835 262 838 300 855 350 858 405 850 450 870 465 880 495'],
    borders: [
      '85 215 110 180 145 188 185 180 200 215 195 255 200 285 190 315 180 310 178 290 165 285 160 250 125 250', '165 285 150 330', '200 240 205 232 215 240 240 232 255 250 285 250 290 330 285 375', '195 310 212 350 212 390', '285 250 288 215 350 215 360 245 358 340', '335 215 345 290 345 330 352 345', '350 215 392 190 395 230 380 260 378 340', '558 145 580 200 550 260 535 305 520 335 495 330 480 380', '575 185 592 245 568 250 590 310 575 350 582 400 600 435 600 462 550 450 497 450', '497 480 522 480 522 450',
      '550 450 552 470 570 480 572 560 540 570 525 572 530 600', '590 310 620 300 665 270 690 240 710 220', '600 440 610 415 640 410 645 380 655 375 705 398 750 375 785 372', '705 220 725 275 740 290 785 372 800 392 840 410 890 400 910 380', '725 255 750 240 765 240 775 255 830 255 865 215 870 185 880 185 882 215 895 260 880 300 905 335 920 385 960 410 985 415 1020 402 1045 382 1075 378 1125 298 1060 270 1040 225 1045 210',
      '1020 402 1008 440 1008 530 1018 555', '890 400 908 440 905 480 893 510', '895 540 955 590 955 602 980 632', '640 410 630 530 600 570 600 605 575 635 540 635 540 662 605 662 625 720 652 720 658 692 693 702 693 755 703 800 730 800 730 853 697 853 697 945 717 977', '845 410 845 440 825 500 825 540 815 570 822 680 840 725 885 762',
      '840 725 805 735 805 800 815 835 825 835 825 862 815 862 795 825 765 825 750 810 730 800', '820 545 855 535', '815 580 840 575 838 600 822 628', '885 762 887 800 880 880 835 905 832 930 875 955 878 1060 850 1110 820 1105', '880 880 900 895 898 930 912 965 922 940 922 900 905 870', '905 812 950 818 980 805 1000 790', '530 967 552 962 565 972 638 972 665 988 745 980 778 990 790 970 810 940 832 928',
      '665 988 720 985 725 1000 750 988 785 1050 790 1088 820 1105 780 1145 755 1205 715 1195 690 1240 675 1240 665 1180', '680 995 680 1100 663 1100 663 1285 650 1300 625 1298 615 1275 608 1292', '850 1110 862 1165 862 1212 850 1210 843 1235 862 1250', '340 110 300 115 270 150 245 205 245 240', '895 240 905 215 925 170 935 130', '935 130 1000 125 1042 182 1022 210 1035 218',
    ],
    dashed: ['1140 210 1140 260 1125 298'],
  },
  {
    name: 'mexico', origin: [540, 620], steps: [1.8667, 2.9037],
    land: ['800 1250 865 1345 890 1400 912 1430 908 1495 925 1535 950 1580 1105 1580 1075 1520 1058 1460 1060 1380 1000 1250', '785 1320 785 1355 808 1375 820 1410 832 1412 828 1385 805 1340 800 1325', '1197 1490 1240 1465 1268 1465 1262 1510 1242 1530 1235 1580 1190 1580'],
    lakes: ['1002 190 1012 200 1022 190 1030 235 1045 205 1060 240 1075 305 1050 290 1040 240 1018 245 1000 230', '915 138 932 135 925 150', '1115 172 1135 158 1128 175', '955 75 968 45 970 0 978 30', '882 25 900 8 892 32', '1112 210 1128 205 1125 214', '1200 208 1214 212 1204 216'],
    rivers: [], borders: [],
  },
  {
    name: 'central america', origin: [600, 1130], steps: [1.5373, 2.481],
    land: ['650 -20 658 15 690 50 700 65 740 95 770 118 800 138 828 120 850 150 880 185 905 190 1010 165 1005 155 975 135 940 135 915 135 930 100 935 60 940 30 952 0 950 -20 895 -20 895 50 870 65 835 72 800 45 790 10 780 -20'],
    lakes: ['694 14 704 17 698 20'], rivers: [],
    borders: ['865 170 870 130 893 125 880 100 890 80 915 80 915 130', '900 188 915 170 930 182 970 172 1000 158', '910 170 930 140'],
  },
  {
    name: 'south america', origin: [1300, 1250], steps: [3, 3],
    land: [
      '600 110 680 115 710 118 712 112 765 120 800 128 830 150 838 165 850 170 860 215 872 238 890 245 888 265 860 290 850 310 835 320 815 345 835 343 862 310 865 340 875 358 912 350 900 380 920 352 938 340 945 322 970 318 1010 330 1030 345 1048 350 1052 398 1070 378 1105 373 1130 385 1200 388 1235 412 1255 430 1280 450 1300 456 1335 456 1350 480 1357 530 1345 580 1320 605 1280 645 1250 695 1237 688 1225 715 1230 790 1222 850 1205 875 1203 910 1190 938 1165 960 1165 990 1135 1020 1055 1025 1030 1048 1000 1055 945 1098 928 1105 932 1200 895 1245 890 1260 235 1260 230 1225 245 1170 258 1110 262 1030 272 975 268 870 240 845 215 815 150 790 100 740',
      '868 310 880 303 935 308 928 335 905 345 875 350 866 330', '872 292 892 290 880 297',
    ],
    lakes: ['275 775 290 772 300 785 317 803 305 808 280 790', '725 150 740 143 733 158', '748 1075 758 1060 752 1102', '862 300 868 300 862 345 868 358 912 352 898 382 922 350 905 347 878 352 868 340'],
    rivers: ['732 740 692 762 705 800 660 865 662 900 640 925 648 1000 670 1075 650 1110 620 1165 598 1250', '725 362 750 370 780 352 830 342'],
    borders: [
      '700 220 740 218 755 215 765 225 800 228 838 170', '765 122 752 140 755 170 765 190', '555 718 568 730 575 800 632 803 632 830 655 855 655 875 638 918 610 900 580 900 530 912 512 940 500 990 460 990 448 1015 438 993 405 993 390 985 360 1018 340 1018 330 965 315 940 320 905 305 885 300 860 285 835 305 800', '290 845 278 868 268 870',
      '500 990 525 1025 555 1048 580 1053 615 1078 655 1100 625 1165 690 1175 740 1150 745 1115 765 1108 775 1125 775 1155 710 1205 675 1250', '750 1075 755 1055 722 1055 712 998 648 993 638 918', '360 1018 365 1025 358 1055 322 1080 325 1155 310 1162 300 1185 275 1245',
    ],
  },
];

const graticule = [
  '766,427.5 2836,427.5', '766,888 1433,888', '1782,888 2836,888', '766,1348.5 2836,1348.5',
  '1186.5,136 1186.5,1666', '1647.5,136 1647.5,853', '1611.5,853 1611.5,948', '1647.5,948 1647.5,1666',
  '2108.5,136 2108.5,1666', '2569,136 2569,1666',
];

const place = ({ origin, steps }) =>
  `translate(${origin[0]} ${origin[1]}) scale(${1 / steps[0]} ${1 / steps[1]})`;

function WorldMap() {
  return (
    <MapCanvas viewBox="766 136 2070 1530">
      <LandLayer>
        {sheets.map((s) => (
          <g key={s.name} transform={place(s)}>
            {s.land.map((points) => <polygon key={points} points={points} />)}
          </g>
        ))}
      </LandLayer>
      {sheets.map((s) => (
        <g key={s.name} transform={place(s)}>
          {(s.seas || []).map((points) => <Lake key={points} points={points} $open />)}
          {s.lakes.map((points) => <Lake key={points} points={points} />)}
        </g>
      ))}
      {graticule.map((points) => <Line key={points} points={points} $color="rgba(205, 210, 203, 0.42)" $weight={1.3} />)}
      {sheets.map((s) => (
        <g key={s.name} transform={place(s)}>
          {s.rivers.map((points) => <Line key={points} points={points} $color="#d6eaec" $weight={1.5} />)}
          {s.borders.map((points) => <Line key={points} points={points} $color="#ead9db" $weight={2} />)}
          {(s.dashed || []).map((points) => <Line key={points} points={points} $color="#ead9db" $weight={2} $dashed />)}
        </g>
      ))}
    </MapCanvas>
  );
}

function ContinentChart() {
  return (
    <Chart viewBox="30 1076 662 620">
      {continents.map((name, i) => {
        const x = 108.2 + i * 84.35;
        return (
          <g key={name}>
            <line x1={x} x2={x} y1="1103" y2="1597" stroke="#ebebeb" strokeWidth="2" />
            <line x1={x} x2={x} y1="1597" y2="1602" stroke="#333" strokeWidth="2" />
            <text
              transform={`translate(${x + 8} 1617) rotate(-45)`}
              textAnchor="end"
              fontFamily="Liberation Sans, Arial, sans-serif"
              fontSize="16.1"
              fill="#4d4d4d"
            >
              {name}
            </text>
          </g>
        );
      })}
    </Chart>
  );
}

const rowRadius = (row, col) => {
  if (row === 0 && col === 0) return '5px 0 0 5px';
  if (row === 2 && col === 2) return '0 5px 5px 0';
  return '0';
};

export default function App() {
  return (
    <Page>
      <GlobalStyle />
      <Header>
        <Logo>Exploring Volcanoes of the World</Logo>
      </Header>
      <Content>
        <Sidebar>
          <IntroCard>
            <b>Example Shiny Dashboard for the <Link>BIOS2 Program</Link></b><br />
            <b>training module, "Creating Shiny Applications in R."</b><br />
            Use the space provided and suggestions in the code to add<br />
            an additional widget to the app.
            <Credit>Created by Jake Lawlor. <Link>See Code Here!</Link></Credit>
          </IntroCard>
          <Card $height={532}>
            <CardHeader>Selection Criteria</CardHeader>
            <FieldLabel $top={18}>Volcano Type</FieldLabel>
            <CheckRows>
              {volcanoTypes.map((row, r) => (
                <CheckRow key={r} $indent={r === 0 ? 2 : 0}>
                  {row.map(([name, width], c) => (
                    <CheckButton key={name} $width={width} $radius={rowRadius(r, c)}>
                      <CheckBox />{name}
                    </CheckButton>
                  ))}
                </CheckRow>
              ))}
            </CheckRows>
            <FieldLabel $top={30}>Space for your additional widget here:</FieldLabel>
          </Card>
          <Card $height={696}>
            <CardHeader>Volcanoes by Continent<Collapse /></CardHeader>
            <ContinentChart />
          </Card>
        </Sidebar>
        <MapCard>
          <WorldMap />
          <ZoomControl>
            <ZoomButton>+</ZoomButton>
            <ZoomButton>−</ZoomButton>
          </ZoomControl>
          <Attribution>
            <Link $plain $color="#2f7aab">Leaflet</Link> | © <Link $plain $color="#2f7aab">OpenStreetMap</Link> contributors © <Link $plain $color="#2f7aab">CARTO</Link>
          </Attribution>
        </MapCard>
      </Content>
      <Annotations>
        <ellipse cx="292.8" cy="886" rx="271" ry="109.5" transform="rotate(-2.3 292.8 886)" />
        <path d="M463 779C494 742 530 720 597 732" />
        <path d="M464 1395C510 1430 565 1444 628 1432" />
        <path d="M1587 1185C1582 1230 1555 1254 1518 1257" />
      </Annotations>
      <Note $x={572.8} $y={698.3} $width={748} $height={374} $angle={10.2} $fill="#fae3b0">
        <NoteText>Create an additional input object</NoteText>
        <NoteText $track={-0.28}>using a UI widget here.</NoteText>
        <NoteText $gap={45.2}>For example:</NoteText>
        <NoteCode $gap={22.5}>sliderInput(</NoteCode>
        <NoteCode $shift={-20}>inputID = “volcano_height”,…)</NoteCode>
      </Note>
      <Note $x={635.4} $y={1229.7} $width={902.4} $height={328} $angle={-10.45} $fill="#a6e0fb">
        <NoteText $track={-0.28}>Then, in server, filter the dataset</NoteText>
        <NoteText>using your additional input object,</NoteText>
        <NoteCode $gap={24.5}>input$volcano_height</NoteCode>
        <NoteText $gap={21.5}>before creating the app’s outputs.</NoteText>
      </Note>
    </Page>
  );
}
